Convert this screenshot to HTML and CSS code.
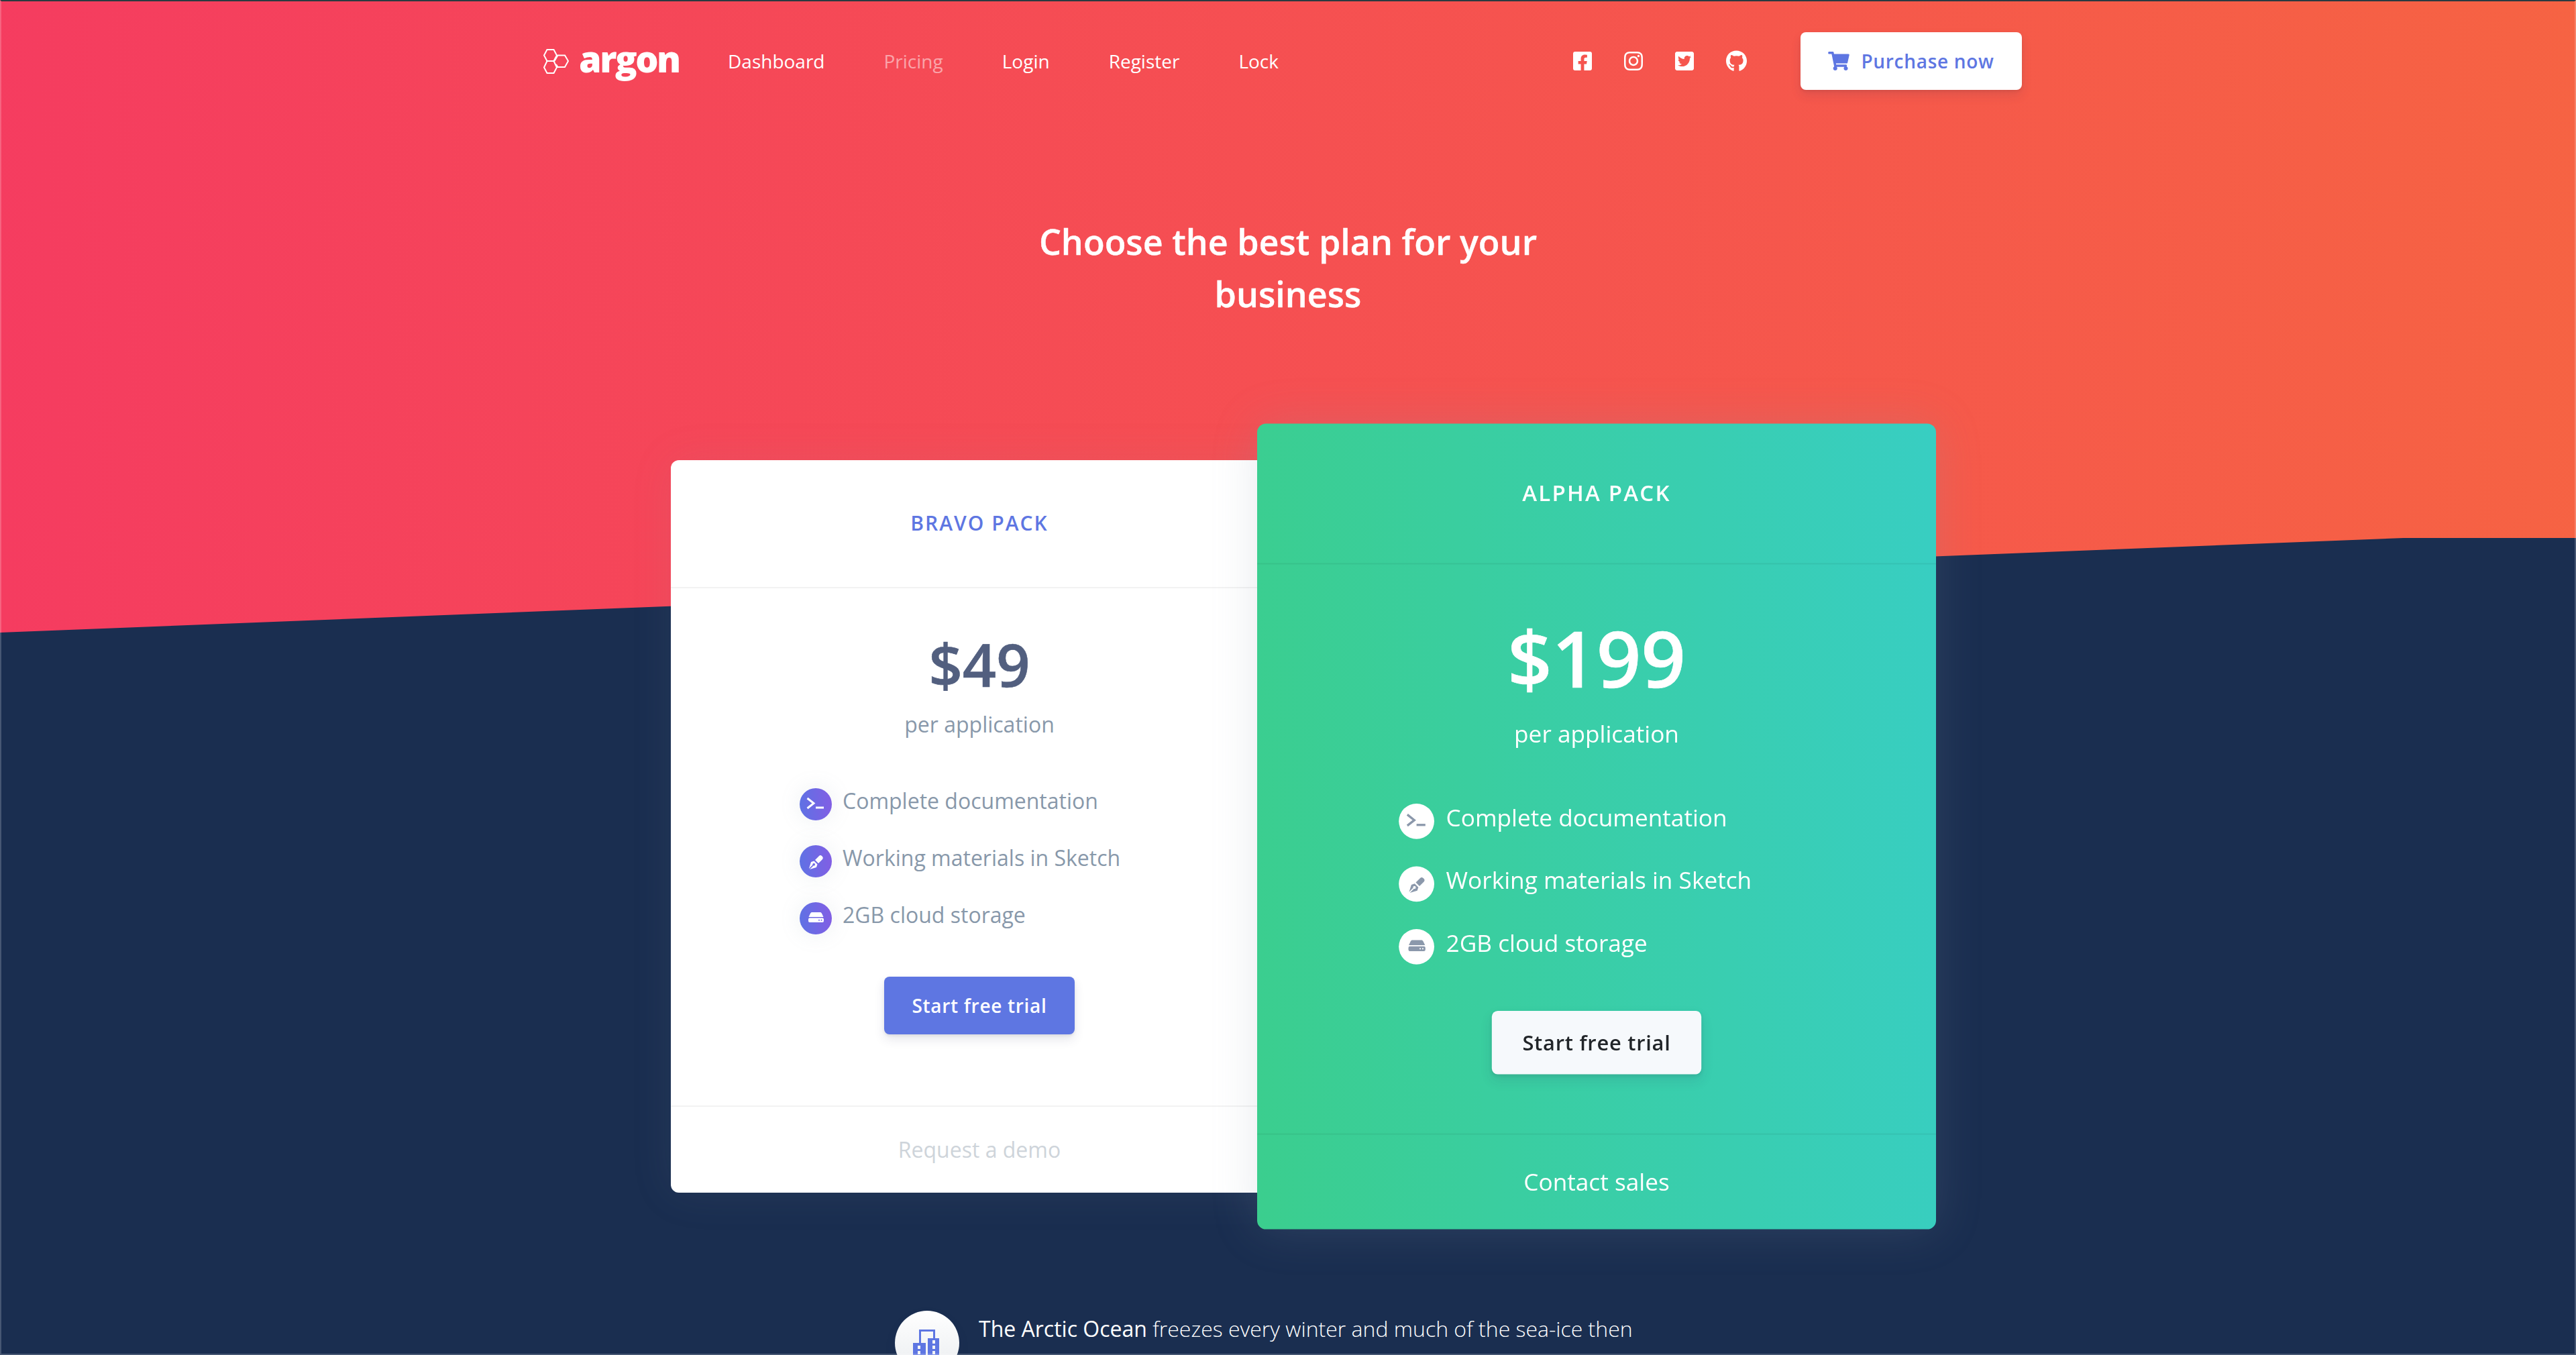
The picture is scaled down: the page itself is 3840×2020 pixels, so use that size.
FILE: index.html
```html
<!DOCTYPE html>
<html lang="en">
<head>
    <meta charset="UTF-8">
    <meta name="viewport" content="width=device-width, initial-scale=1.0">
    <title>Pricing - Argon</title>
    <link rel="stylesheet" href="styles.css">
</head>
<body>

<div class="hero">
    <nav class="navbar">
        <a class="brand" href="#">
            <svg class="brand-icon" viewBox="0 0 38 37" fill="none" stroke="#fff" stroke-width="2">
                <path d="M1 9.500 5.500 1h10L20 9.500 15.500 18h-10z"/>
                <path d="M1 27.500 5.500 18h10L20 27.500 15.500 36h-10z"/>
                <path d="M16.500 18 21.500 9.500h10.500L37 18l-5 9H21.500L19 23"/>
            </svg>
            <span class="brand-name">argon</span>
        </a>
        <ul class="nav-links">
            <li><a href="#">Dashboard</a></li>
            <li><a class="muted" href="#">Pricing</a></li>
            <li><a href="#">Login</a></li>
            <li><a href="#">Register</a></li>
            <li><a href="#">Lock</a></li>
        </ul>
        <div class="social">
            <svg class="fa" viewBox="0 0 448 512"><path d="M400 32H48A48 48 0 0 0 0 80v352a48 48 0 0 0 48 48h137.250V327.690h-63V256h63v-54.640c0-62.150 37-96.480 93.670-96.480 27.140 0 55.520 4.840 55.520 4.840v61h-31.270c-30.810 0-40.420 19.120-40.420 38.730V256h68.780l-11 71.690h-57.780V480H400a48 48 0 0 0 48-48V80a48 48 0 0 0-48-48z"/></svg>
            <svg class="fa" viewBox="0 0 448 512"><path d="M224.100 141c-63.600 0-114.900 51.300-114.900 114.900s51.300 114.900 114.900 114.900S339 319.500 339 255.900 287.700 141 224.100 141zm0 189.600c-41.100 0-74.700-33.500-74.700-74.700s33.500-74.700 74.700-74.700 74.700 33.500 74.700 74.700-33.600 74.700-74.700 74.700zm146.400-194.300c0 14.900-12 26.800-26.800 26.800-14.900 0-26.800-12-26.800-26.800s12-26.800 26.800-26.800 26.800 12 26.800 26.800zm76.100 27.200c-1.700-35.900-9.900-67.700-36.200-93.900-26.200-26.200-58-34.400-93.900-36.200-37-2.100-147.900-2.100-184.900 0-35.800 1.700-67.600 9.900-93.900 36.100s-34.400 58-36.200 93.900c-2.100 37-2.100 147.900 0 184.900 1.700 35.900 9.900 67.700 36.200 93.900s58 34.400 93.900 36.200c37 2.100 147.900 2.100 184.900 0 35.900-1.700 67.700-9.900 93.900-36.200 26.200-26.200 34.400-58 36.200-93.900 2.100-37 2.100-147.800 0-184.800zM398.800 388c-7.800 19.600-22.900 34.700-42.600 42.600-29.500 11.700-99.500 9-132.100 9s-102.700 2.600-132.100-9c-19.600-7.800-34.700-22.900-42.600-42.600-11.700-29.500-9-99.500-9-132.100s-2.600-102.700 9-132.100c7.800-19.600 22.900-34.700 42.600-42.600 29.500-11.700 99.500-9 132.100-9s102.700-2.600 132.100 9c19.600 7.800 34.700 22.900 42.600 42.600 11.700 29.500 9 99.500 9 132.100s2.700 102.700-9 132.100z"/></svg>
            <svg class="fa" viewBox="0 0 448 512"><path d="M400 32H48C21.500 32 0 53.500 0 80v352c0 26.500 21.500 48 48 48h352c26.500 0 48-21.500 48-48V80c0-26.500-21.500-48-48-48zm-48.900 158.800c.2 2.800.2 5.700.2 8.500 0 86.700-66 186.600-186.600 186.600-37.200 0-71.700-10.800-100.700-29.400 5.300.6 10.400.8 15.800.8 30.700 0 58.900-10.400 81.400-28-28.800-.6-53-19.500-61.300-45.500 10.100 1.500 19.200 1.500 29.600-1.200-30-6.100-52.500-32.500-52.500-64.400v-.8c8.700 4.900 18.900 7.900 29.600 8.300a65.447 65.447 0 0 1-29.200-54.600c0-12.200 3.200-23.400 8.900-33.100 32.300 39.800 80.800 65.800 135.200 68.600-9.300-44.500 24-80.600 64-80.600 18.900 0 35.900 7.900 47.900 20.700 14.800-2.800 29-8.300 41.600-15.800-4.900 15.200-15.200 28-28.800 36.100 13.200-1.400 26-5.100 37.800-10.200-8.900 13.100-20.100 24.700-32.900 34z"/></svg>
            <svg class="fa github" viewBox="0 0 496 512"><path d="M165.900 397.400c0 2-2.300 3.600-5.200 3.600-3.300 0-5.600-1.600-5.600-3.600 0-2 2.300-3.600 5.200-3.600 3-.3 5.600 1.300 5.600 3.600zm-31.100-4.500c-.7 2 1.300 4.300 4.300 4.900 2.600 1 5.600 0 6.200-2s-1.300-4.300-4.300-5.200c-2.600-.7-5.500.3-6.200 2.300zm44.200-1.700c-2.900.7-4.900 2.600-4.600 4.900.3 2 2.900 3.300 5.900 2.600 2.900-.7 4.900-2.600 4.600-4.600-.3-1.900-3-3.200-5.900-2.900zM244.800 8C106.100 8 0 113.300 0 252c0 110.900 69.800 205.800 169.500 239.200 12.800 2.300 17.300-5.600 17.300-12.100 0-6.200-.3-40.400-.3-61.400 0 0-70 15-84.700-29.800 0 0-11.400-29.100-27.800-36.600 0 0-22.900-15.700 1.600-15.400 0 0 24.900 2 38.600 25.800 21.900 38.600 58.600 27.500 72.900 20.900 2.300-16 8.800-27.100 16-33.700-55.900-6.200-112.300-14.300-112.300-110.500 0-27.500 7.600-41.300 23.600-58.900-2.600-6.500-11.100-33.300 2.600-67.900 20.900-6.500 69 27 69 27 20-5.600 41.500-8.500 62.800-8.500s42.800 2.900 62.800 8.500c0 0 48.100-33.600 69-27 13.700 34.700 5.200 61.400 2.600 67.900 16 17.700 25.800 31.500 25.800 58.900 0 96.500-58.900 104.200-114.800 110.500 9.200 7.900 17 22.900 17 46.400 0 33.700-.3 75.400-.3 83.600 0 6.500 4.600 14.400 17.300 12.100C428.200 457.800 496 362.900 496 252 496 113.300 383.500 8 244.800 8z"/></svg>
        </div>
        <a class="btn btn-purchase" href="#">
            <svg class="cart" viewBox="0 0 576 512"><path d="M528.120 301.319l47.273-208C578.806 78.301 567.391 64 551.990 64H159.208l-9.166-44.810C147.758 8.021 137.930 0 126.529 0H24C10.745 0 0 10.745 0 24v16c0 13.255 10.745 24 24 24h69.883l70.248 343.435C147.325 417.100 136 435.222 136 456c0 30.928 25.072 56 56 56s56-25.072 56-56c0-15.674-6.447-29.835-16.824-40h209.647C430.447 426.165 424 440.326 424 456c0 30.928 25.072 56 56 56s56-25.072 56-56c0-22.172-12.888-41.332-31.579-50.405l5.517-24.276c3.413-15.018-8.002-29.319-23.403-29.319H218.117l-6.545-32h293.145c11.206 0 20.920-7.754 23.403-18.681z"/></svg>
            Purchase now
        </a>
    </nav>

    <h1 class="title">Choose the best plan for your business</h1>
</div>

<div class="cards">
    <div class="card card-white">
        <div class="card-head">Bravo pack</div>
        <div class="card-body">
            <div class="price">$49</div>
            <div class="per">per application</div>
            <ul class="features">
                <li>
                    <span class="dot">
                        <svg viewBox="0 0 48 48"><path class="line" d="M11.500 15 21 22.500 11.500 30"/><rect x="24" y="27.500" width="12" height="3" fill="currentColor"/></svg>
                    </span>
                    <span class="label">Complete documentation</span>
                </li>
                <li>
                    <span class="dot">
                        <svg viewBox="0 0 48 48"><path d="M29 16a3 3 0 0 1 4 0l1 1a3 3 0 0 1 0 4l-6 6-5-5zM21.500 23.500l5 5-1.500 4.500-10 3 5.600-5.600a1.800 1.800 0 1 0-1.100-1.100l-5.600 5.600L17 25z" fill="currentColor"/></svg>
                    </span>
                    <span class="label">Working materials in Sketch</span>
                </li>
                <li>
                    <span class="dot">
                        <svg viewBox="0 0 48 48"><path fill-rule="evenodd" d="M18.500 15h12c1 0 2 .6 2.400 1.500l2.600 5.500h-22l2.600-5.500c.4-.9 1.400-1.500 2.400-1.500zM15 23.500h19a2 2 0 0 1 2 2V28a2 2 0 0 1-2 2H15a2 2 0 0 1-2-2v-2.500a2 2 0 0 1 2-2zM29 25.800a1 1 0 1 0 0 2 1 1 0 0 0 0-2zM32.500 25.800a1 1 0 1 0 0 2 1 1 0 0 0 0-2z" fill="currentColor"/></svg>
                    </span>
                    <span class="label">2GB cloud storage</span>
                </li>
            </ul>
            <a class="btn btn-primary" href="#">Start free trial</a>
        </div>
        <div class="card-foot"><a href="#">Request a demo</a></div>
    </div>

    <div class="card card-green">
        <div class="card-head">Alpha pack</div>
        <div class="card-body">
            <div class="price">$199</div>
            <div class="per">per application</div>
            <ul class="features">
                <li>
                    <span class="dot">
                        <svg viewBox="0 0 48 48"><path class="line" d="M11.500 15 21 22.500 11.500 30"/><rect x="24" y="27.500" width="12" height="3" fill="currentColor"/></svg>
                    </span>
                    <span class="label">Complete documentation</span>
                </li>
                <li>
                    <span class="dot">
                        <svg viewBox="0 0 48 48"><path d="M29 16a3 3 0 0 1 4 0l1 1a3 3 0 0 1 0 4l-6 6-5-5zM21.500 23.500l5 5-1.500 4.500-10 3 5.600-5.600a1.800 1.800 0 1 0-1.100-1.100l-5.600 5.600L17 25z" fill="currentColor"/></svg>
                    </span>
                    <span class="label">Working materials in Sketch</span>
                </li>
                <li>
                    <span class="dot">
                        <svg viewBox="0 0 48 48"><path fill-rule="evenodd" d="M18.500 15h12c1 0 2 .6 2.400 1.500l2.600 5.500h-22l2.600-5.500c.4-.9 1.400-1.500 2.400-1.500zM15 23.500h19a2 2 0 0 1 2 2V28a2 2 0 0 1-2 2H15a2 2 0 0 1-2-2v-2.500a2 2 0 0 1 2-2zM29 25.800a1 1 0 1 0 0 2 1 1 0 0 0 0-2zM32.500 25.800a1 1 0 1 0 0 2 1 1 0 0 0 0-2z" fill="currentColor"/></svg>
                    </span>
                    <span class="label">2GB cloud storage</span>
                </li>
            </ul>
            <a class="btn btn-light" href="#">Start free trial</a>
        </div>
        <div class="card-foot"><a href="#">Contact sales</a></div>
    </div>
</div>

<div class="note">
    <span class="note-icon">
        <svg viewBox="0 0 96 96">
            <path d="M37.500 48V29.500h21V41" fill="none" stroke="#5e76e2" stroke-width="3"/>
            <path fill="#5e76e2" fill-rule="evenodd" d="M27 48h19v48H27zM49 41h17v55H49zM34 52v5h4v-5zM34 60v5h4v-5zM56 44v5h4v-5zM56 52v5h4v-5zM56 60v5h4v-5z"/>
        </svg>
    </span>
    <p><strong>The Arctic Ocean</strong> freezes every winter and much of the sea-ice then</p>
</div>

</body>
</html>
```

FILE: styles.css
```css
html, body {
    height: 2020px;
    overflow: hidden;
}
body {
    margin: 0;
    background-color: #1a2e50;
    font-family: "Open Sans", "Noto Sans", sans-serif;
    font-size: 32px;
    color: #fff;
}
/* thin frame around the captured window */
body::after {
    content: "";
    position: fixed;
    top: 0;
    right: 0;
    bottom: 0;
    left: 0;
    border: 2px solid rgba(255, 255, 255, 0.2);
    border-top-color: #2b3a40;
    pointer-events: none;
}
a {
    color: inherit;
    text-decoration: none;
}
ul {
    list-style: none;
    margin: 0;
    padding: 0;
}

.hero {
    height: 943px;
    overflow: hidden;
    background: linear-gradient(87deg, #f53c60, #f66343);
    clip-path: polygon(0 0, 100% 0, 100% 802px, 3583px 802px, 0 943px);
}

.navbar {
    display: flex;
    align-items: center;
    width: 2204px;
    margin-left: 810px;
    padding-top: 48px;
}
.brand {
    display: flex;
    align-items: center;
    width: 275px;
}
.brand-icon {
    width: 38px;
    height: 37px;
    margin-right: 15px;
}
.brand-name {
    padding-bottom: 8px;
    font-size: 54px;
    line-height: 60px;
    font-weight: 800;
    letter-spacing: -2.5px;
}
.nav-links {
    display: flex;
    gap: 88px;
    font-size: 28px;
}
.muted {
    color: rgba(255, 255, 255, 0.5);
}
.social {
    display: flex;
    align-items: center;
    gap: 48px;
    margin-left: auto;
    margin-right: 80px;
}
.fa {
    display: block;
    width: 28px;
    height: 32px;
    fill: #fff;
}
.fa.github {
    width: 31px;
}

.btn {
    display: inline-flex;
    align-items: center;
    justify-content: center;
    height: 86px;
    border-radius: 8px;
    font-size: 28px;
    font-weight: 600;
    letter-spacing: 0.7px;
    box-shadow: 0 8px 16px rgba(50, 50, 93, 0.11), 0 2px 4px rgba(0, 0, 0, 0.08);
}
.btn-purchase {
    width: 330px;
    background-color: #fff;
    color: #5e76e2;
}
.cart {
    width: 32px;
    height: 28px;
    margin-right: 17px;
    fill: currentColor;
}
.btn-primary {
    width: 284px;
    background-color: #5e76e2;
    color: #fff;
}
.btn-light {
    width: 284px;
    background-color: #f6f9fc;
    color: #212529;
}

.title {
    width: 800px;
    margin: 187px auto 0;
    font-size: 52px;
    line-height: 78px;
    font-weight: 600;
    text-align: center;
    -webkit-text-stroke: 0.4px #fff;
}

.cards {
    position: relative;
    display: flex;
    width: 1840px;
    margin: -257px auto 0;
}
.card {
    display: flex;
    flex-direction: column;
    width: 920px;
    text-align: center;
}
.card-white {
    background-color: #fff;
    border-radius: 12px 0 0 12px;
    color: #8898aa;
    box-shadow: 0 0 64px 0 rgba(136, 152, 170, 0.1);
}
.card-green {
    position: relative;
    z-index: 1;
    transform: scale(1.1);
    background: linear-gradient(87deg, #3bce8e, #38cec2);
    border-radius: 12px;
    box-shadow: 0 0 64px 0 rgba(136, 152, 170, 0.2);
}
.card-head {
    padding: 73px 0 74px;
    border-bottom: 2px solid rgba(0, 0, 0, 0.05);
    font-size: 30px;
    line-height: 42px;
    font-weight: 600;
    letter-spacing: 2px;
    text-transform: uppercase;
}
.card-white .card-head {
    color: #5e76e2;
}
.card-body {
    flex: 1;
    padding: 47px 0 80px;
}
.price {
    font-size: 88px;
    line-height: 132px;
    font-weight: 600;
    -webkit-text-stroke: 0.6px currentColor;
}
.card-white .price {
    color: #525f7f;
}
.card-green .price {
    font-size: 105.6px;
    line-height: 158.4px;
}
.per {
    line-height: 48px;
}
.features {
    margin: 52px 0 45px;
    padding-left: 192px;
    text-align: left;
}
.features li {
    display: flex;
    align-items: center;
    height: 85px;
}
.dot {
    flex-shrink: 0;
    width: 48px;
    height: 48px;
    margin-right: 16px;
    border-radius: 50%;
}
.dot svg {
    display: block;
    width: 48px;
    height: 48px;
}
.line {
    fill: none;
    stroke: currentColor;
    stroke-width: 3;
}
.card-white .dot {
    background: linear-gradient(87deg, #5e72e4, #825ee4);
    color: #fff;
    box-shadow: 0 0 32px rgba(136, 152, 170, 0.15);
}
.card-green .dot {
    background-color: #fff;
    color: #8b98ab;
}
.label {
    padding-bottom: 10px;
}
.card-foot {
    height: 130px;
    border-top: 2px solid rgba(0, 0, 0, 0.05);
    box-sizing: border-box;
    line-height: 128px;
}
.card-white .card-foot a {
    color: #ced4da;
}

.note {
    display: flex;
    width: 1172px;
    margin: 176px auto 0;
}
.note-icon {
    flex-shrink: 0;
    width: 96px;
    height: 96px;
    margin-right: 29px;
    border-radius: 50%;
    background: linear-gradient(180deg, #fff, #e9ecef);
    box-shadow: 0 8px 16px rgba(50, 50, 93, 0.11);
}
.note-icon svg {
    display: block;
    width: 96px;
    height: 96px;
}
.note p {
    margin: 0;
    font-size: 32px;
    line-height: 54px;
    font-weight: 300;
    white-space: nowrap;
}
.note strong {
    font-weight: 400;
}
```
